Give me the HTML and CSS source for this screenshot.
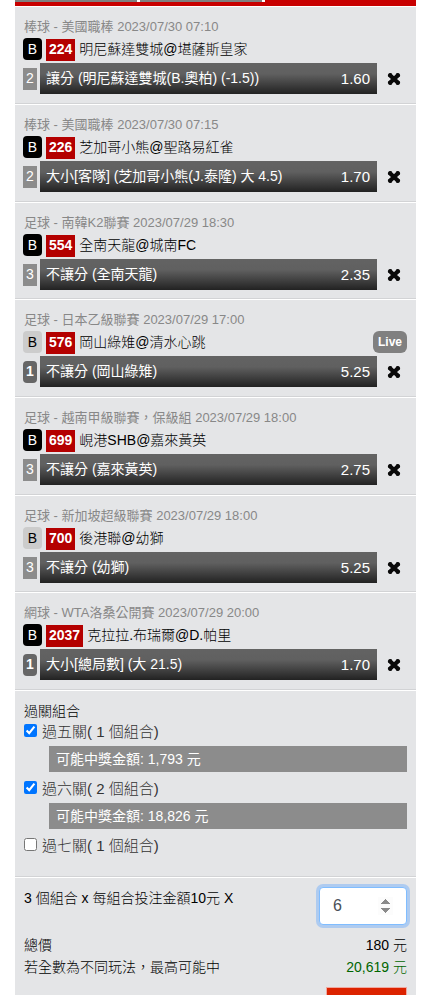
FILE: index.html
```html
<!DOCTYPE html>
<html lang="zh-Hant">
<head>
    <meta charset="UTF-8">
    <meta name="viewport" content="width=device-width, initial-scale=1.0">
    <title>投注單</title>
    <link rel="stylesheet" href="styles.css">
</head>
<body>
    <svg width="0" height="0" class="defs">
        <symbol id="cross" viewBox="0 0 14 14">
            <path d="M3 3.2L11 10.8M11 3.2L3 10.8" fill="none" stroke="#0a0a0a" stroke-width="4.2" stroke-linecap="round"/>
            <path d="M2.4 3.8L3.8 2.4M10.2 2.4L11.6 3.8M11.6 10.2L10.2 11.6M3.8 11.6L2.4 10.2" fill="none" stroke="#0a0a0a" stroke-width="2.6" stroke-linecap="round"/>
        </symbol>
    </svg>

    <main class="slip">
        <div class="tabs">
            <span class="tab"></span>
            <span class="tab"></span>
            <span class="tab active"></span>
        </div>

        <section class="bet">
            <div class="meta">棒球 - 美國職棒 2023/07/30 07:10</div>
            <div class="match">
                <span class="banker on">B</span>
                <span class="code">224</span>
                <span>明尼蘇達雙城@堪薩斯皇家</span>
            </div>
            <div class="pick">
                <span class="min">2</span>
                <div class="bar"><span>讓分 (明尼蘇達雙城(B.奧柏) (-1.5))</span><span class="odds">1.60</span></div>
                <button type="button" class="remove" aria-label="刪除"><svg><use href="#cross"/></svg></button>
            </div>
        </section>

        <section class="bet">
            <div class="meta">棒球 - 美國職棒 2023/07/30 07:15</div>
            <div class="match">
                <span class="banker on">B</span>
                <span class="code">226</span>
                <span>芝加哥小熊@聖路易紅雀</span>
            </div>
            <div class="pick">
                <span class="min">2</span>
                <div class="bar"><span>大小[客隊] (芝加哥小熊(J.泰隆) 大 4.5)</span><span class="odds">1.70</span></div>
                <button type="button" class="remove" aria-label="刪除"><svg><use href="#cross"/></svg></button>
            </div>
        </section>

        <section class="bet">
            <div class="meta">足球 - 南韓K2聯賽 2023/07/29 18:30</div>
            <div class="match">
                <span class="banker on">B</span>
                <span class="code">554</span>
                <span>全南天龍@城南FC</span>
            </div>
            <div class="pick">
                <span class="min">3</span>
                <div class="bar"><span>不讓分 (全南天龍)</span><span class="odds">2.35</span></div>
                <button type="button" class="remove" aria-label="刪除"><svg><use href="#cross"/></svg></button>
            </div>
        </section>

        <section class="bet">
            <div class="meta">足球 - 日本乙級聯賽 2023/07/29 17:00</div>
            <div class="match">
                <span class="banker">B</span>
                <span class="code">576</span>
                <span>岡山綠雉@清水心跳</span>
                <span class="live">Live</span>
            </div>
            <div class="pick">
                <span class="min single">1</span>
                <div class="bar"><span>不讓分 (岡山綠雉)</span><span class="odds">5.25</span></div>
                <button type="button" class="remove" aria-label="刪除"><svg><use href="#cross"/></svg></button>
            </div>
        </section>

        <section class="bet">
            <div class="meta">足球 - 越南甲級聯賽，保級組 2023/07/29 18:00</div>
            <div class="match">
                <span class="banker on">B</span>
                <span class="code">699</span>
                <span>峴港SHB@嘉來黃英</span>
            </div>
            <div class="pick">
                <span class="min">3</span>
                <div class="bar"><span>不讓分 (嘉來黃英)</span><span class="odds">2.75</span></div>
                <button type="button" class="remove" aria-label="刪除"><svg><use href="#cross"/></svg></button>
            </div>
        </section>

        <section class="bet">
            <div class="meta">足球 - 新加坡超級聯賽 2023/07/29 18:00</div>
            <div class="match">
                <span class="banker">B</span>
                <span class="code">700</span>
                <span>後港聯@幼獅</span>
            </div>
            <div class="pick">
                <span class="min">3</span>
                <div class="bar"><span>不讓分 (幼獅)</span><span class="odds">5.25</span></div>
                <button type="button" class="remove" aria-label="刪除"><svg><use href="#cross"/></svg></button>
            </div>
        </section>

        <section class="bet">
            <div class="meta">網球 - WTA洛桑公開賽 2023/07/29 20:00</div>
            <div class="match">
                <span class="banker on">B</span>
                <span class="code">2037</span>
                <span>克拉拉.布瑞爾@D.帕里</span>
            </div>
            <div class="pick">
                <span class="min single">1</span>
                <div class="bar"><span>大小[總局數] (大 21.5)</span><span class="odds">1.70</span></div>
                <button type="button" class="remove" aria-label="刪除"><svg><use href="#cross"/></svg></button>
            </div>
        </section>

        <section class="combos">
            <div class="combos-title">過關組合</div>
            <div class="combo">
                <input type="checkbox" id="combo5" checked>
                <label for="combo5">過五關( 1 個組合)</label>
            </div>
            <div class="win">可能中獎金額: 1,793 元</div>
            <div class="combo">
                <input type="checkbox" id="combo6" checked>
                <label for="combo6">過六關( 2 個組合)</label>
            </div>
            <div class="win">可能中獎金額: 18,826 元</div>
            <div class="combo">
                <input type="checkbox" id="combo7">
                <label for="combo7">過七關( 1 個組合)</label>
            </div>
        </section>

        <section class="summary">
            <div class="stake">
                <label for="unit">3 個組合 x 每組合投注金額10元 X</label>
                <input type="number" id="unit" value="6" min="1">
            </div>
            <div class="row"><span>總價</span><span>180 元</span></div>
            <div class="row"><span>若全數為不同玩法，最高可能中</span><span class="green">20,619 元</span></div>
            <button type="button" class="submit" aria-label="投注"></button>
        </section>
    </main>
</body>
</html>
```
FILE: styles.css
```css
* {
    box-sizing: border-box;
}

body {
    margin: 0;
    background: #fff;
    color: #000;
    font-family: "Liberation Sans", Arial, "Noto Sans CJK TC", sans-serif;
    font-size: 14px;
    font-weight: 300;
    line-height: 22px;
}

.defs {
    position: absolute;
}

.slip {
    max-height: 100vh;
    margin: 0 21px 0 15px;
    overflow-y: auto;
    scrollbar-width: none;
    background: #e4e5e7;
}

/* tabs */
.tabs {
    display: grid;
    grid-template-columns: 122px 122px 1fr;
    gap: 3px;
    background: #fff;
    border-bottom: 4px solid #c80000;
}

.tab {
    height: 2px;
    background: #808080;
}

.tab.active {
    background: #c80000;
}

.bet,
.combos,
.summary {
    padding: 9px;
    border-top: 1px solid #fff;
    border-bottom: 1px solid #d2d3d5;
}

/* bets */
.bet {
    padding-left: 8px;
}

.bet:nth-of-type(3n) {
    padding-bottom: 8px;
}

.meta {
    padding-left: 1px;
    font-size: 13px;
    font-weight: 400;
    color: #888;
    white-space: nowrap;
}

.match {
    display: flex;
    gap: 4px;
    height: 23px;
    margin-bottom: 2px;
    white-space: nowrap;
}

.banker {
    width: 19px;
    height: 22px;
    border-radius: 4px;
    background: #ccc;
    text-align: center;
}

.banker.on {
    background: #000;
    color: #fff;
}

.code {
    height: 22px;
    margin-top: 1px;
    padding: 0 3px;
    background: #b40000;
    color: #fff;
    font-weight: bold;
    line-height: 21px;
}

.live {
    height: 22px;
    margin-left: auto;
    padding: 0 5px;
    border-radius: 6px;
    background: #808080;
    color: #fff;
    font-size: 12px;
    font-weight: bold;
}

.pick {
    display: flex;
    align-items: center;
}

.min {
    width: 14px;
    height: 22px;
    margin-right: 3px;
    background: #8c8c8c;
    color: #fff;
    line-height: 21px;
    text-align: center;
}

.min.single {
    border-radius: 4px;
    background: #666;
    font-weight: bold;
}

.bar {
    display: flex;
    flex: 1;
    justify-content: space-between;
    padding: 0 7px 0 6px;
    font-weight: 400;
    line-height: 31px;
    color: #fff;
    background: linear-gradient(#636363, #606060 35%, #222);
    white-space: nowrap;
}

.odds {
    font-size: 15px;
}

.remove {
    width: 14px;
    height: 14px;
    margin: 0 6px 0 10px;
    padding: 0;
    border: none;
    background: none;
    cursor: pointer;
}

.remove svg {
    display: block;
    width: 14px;
    height: 14px;
}

/* combinations */
.combos {
    padding-bottom: 20px;
}

.combo {
    display: flex;
    gap: 5px;
    height: 20px;
    font-size: 15px;
    line-height: 20px;
    color: #333;
}

.combo input {
    width: 13px;
    height: 13px;
    margin: 2px 0 0;
}

.win {
    margin: 4px 0 7px 25px;
    padding: 0 7px;
    font-weight: 400;
    line-height: 26px;
    color: #fff;
    background: #8c8c8c;
}

/* summary */
.summary {
    border-bottom: none;
}

.stake {
    display: flex;
    justify-content: space-between;
    height: 47px;
}

.stake input {
    width: 88px;
    height: 38px;
    padding: 6px 13px;
    border: 1px solid #80bdff;
    border-radius: 4px;
    outline: none;
    box-shadow: 0 0 0 3px #aecbf0;
    color: #495057;
    font-family: inherit;
    font-size: 16px;
}

.stake input::-webkit-inner-spin-button {
    opacity: 1;
}

.row {
    display: flex;
    justify-content: space-between;
}

.green {
    color: #060;
}

.submit {
    display: block;
    width: 81px;
    height: 34px;
    margin: 9px 0 0 auto;
    border: 1px solid #f0a8a0;
    background: #dc2300;
    cursor: pointer;
}
```
